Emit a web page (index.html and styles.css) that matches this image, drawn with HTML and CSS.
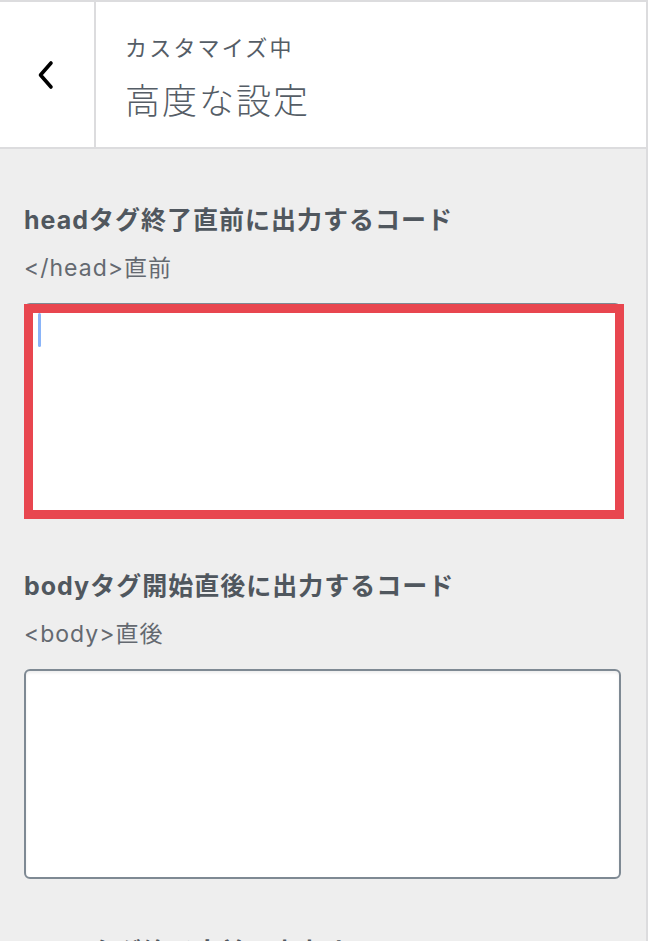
FILE: index.html
```html
<!DOCTYPE html>
<html lang="ja">
<head>
<meta charset="utf-8">
<title>高度な設定</title>
<link rel="stylesheet" href="styles.css">
</head>
<body>
<div class="panel">
  <header class="head">
    <button class="back" aria-label="戻る">
      <svg width="20" height="30" viewBox="0 0 20 30"><polyline points="13,3 2.5,15 13,27" fill="none" stroke="#000" stroke-width="3.6" stroke-linecap="round" stroke-linejoin="round"/></svg>
    </button>
    <div class="titles">
      <span class="crumb">カスタマイズ中</span>
      <h1 class="title">高度な設定</h1>
    </div>
  </header>
  <main class="content">
    <section class="control">
      <h2 class="label">headタグ終了直前に出力するコード</h2>
      <p class="desc">&lt;/head&gt;直前</p>
      <div class="field">
        <textarea class="code"></textarea>
        <span class="caret"></span>
        <span class="mark"></span>
      </div>
    </section>
    <section class="control">
      <h2 class="label">bodyタグ開始直後に出力するコード</h2>
      <p class="desc">&lt;body&gt;直後</p>
      <div class="field">
        <textarea class="code"></textarea>
      </div>
    </section>
    <section class="control">
      <h2 class="label">bodyタグ終了直前に出力するコード</h2>
      <p class="desc">&lt;/body&gt;直前</p>
      <div class="field">
        <textarea class="code"></textarea>
      </div>
    </section>
  </main>
</div>
</body>
</html>
```
FILE: styles.css
```css
* { box-sizing: border-box; }
html, body {
  margin: 0;
  padding: 0;
  background: #eeeeee;
  overflow: hidden;
}
body {
  font-family: Inter, "Noto Sans CJK JP", sans-serif;
  color: #50575e;
}
.panel {
  width: 648px;
  min-height: 941px;
  border-top: 2px solid #dcdcde;
  border-right: 2px solid #dcdcde;
  background: #eeeeee;
}
.head {
  display: flex;
  height: 147px;
  background: #fff;
  border-bottom: 2px solid #dcdcde;
}
.back {
  width: 96px;
  flex: none;
  border: 0;
  border-right: 2px solid #dcdcde;
  background: #fff;
  padding: 0 0 0 2px;
  display: flex;
  align-items: center;
  justify-content: center;
  margin: 0;
}
.back svg { display: block; }
.titles {
  display: flex;
  flex-direction: column;
  padding: 29px 0 0 29px;
}
.crumb {
  font-family: "Noto Sans CJK JP", sans-serif;
  font-size: 22px;
  line-height: 30px;
  letter-spacing: 2.2px;
  color: #555d66;
}
.title {
  margin: 16px 0 0;
  font-family: "Noto Sans CJK JP", sans-serif;
  font-weight: 300;
  font-size: 35px;
  line-height: 44px;
  letter-spacing: 2px;
  color: #555d66;
}
.content {
  padding: 55px 24px 0 24px;
  display: flex;
  flex-direction: column;
  gap: 57px;
}
.control {
  display: flex;
  flex-direction: column;
}
.label {
  margin: 0;
  font-size: 25px;
  line-height: 32px;
  font-weight: 700;
  color: #50575e;
  letter-spacing: 1px;
}
.desc {
  margin: 17px 0 0;
  font-size: 23px;
  line-height: 30px;
  color: #646970;
  letter-spacing: 1px;
}
.field {
  position: relative;
  margin-top: 20px;
  width: 597px;
  height: 210px;
}
.code {
  display: block;
  width: 100%;
  height: 100%;
  margin: 0;
  border: 2px solid #7e8993;
  border-radius: 6px;
  background: #fff;
  box-shadow: inset 0 2px 3px rgba(0,0,0,0.07);
  resize: none;
  outline: none;
}
.caret {
  position: absolute;
  left: 14px;
  top: 10px;
  width: 3px;
  height: 34px;
  border-radius: 2px;
  background: #8ab4f8;
}
.mark {
  position: absolute;
  left: 0;
  top: 1px;
  right: -3px;
  bottom: -6px;
  border: 9px solid #e8464f;
  pointer-events: none;
}
```
